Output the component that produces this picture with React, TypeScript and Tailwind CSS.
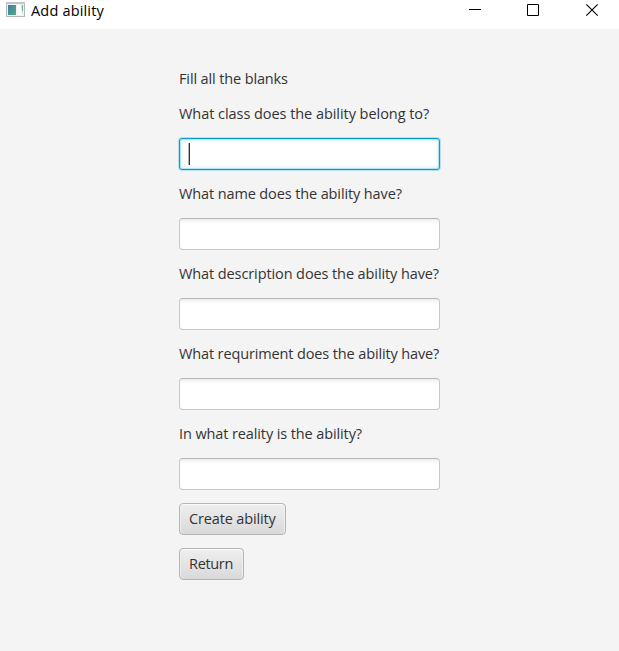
import type { ReactNode } from "react";

const labelBase = "h-5 whitespace-nowrap leading-5";

function Question({ text, tracking, focused = false }: { text: string; tracking: string; focused?: boolean }) {
  return (
    <div className="flex flex-col gap-3.5">
      <label className={`${labelBase} ${tracking}`}>{text}</label>
      {focused ? (
        <div className="flex h-8 w-[261px] items-center rounded-[3px] border border-[#039ed3] bg-white pl-[9px] shadow-[0_0_0_1px_#b5dfec,inset_0_0_0_1px_#b5e2f1,inset_0_0_3px_2px_#dff3f9]">
          <span className="h-[22px] w-px bg-[#333333] shadow-[-1px_0_0_#b0b0b0]" />
        </div>
      ) : (
        <div className="h-8 w-[261px] rounded-[4px] border border-[#c8c8c8] border-t-[#b5b5b5] bg-gradient-to-b from-[#efefef] to-white to-[5px]" />
      )}
    </div>
  );
}

function Button({ children, className }: { children: ReactNode; className: string }) {
  return (
    <button
      className={`flex h-8 items-center whitespace-nowrap rounded-[4px] border border-[#b5b5b5] bg-gradient-to-b from-[#efefef] to-[#d9d9d9] pl-[9px] leading-5 shadow-[inset_0_1px_0_#fafafa,inset_1px_0_0_#eeeeee,inset_-1px_0_0_#eeeeee] ${className}`}
    >
      {children}
    </button>
  );
}

export default function App() {
  return (
    <div className="flex h-[651px] w-[619px] flex-col overflow-hidden bg-[#f4f4f4] font-['Open_Sans','Noto_Sans',sans-serif] text-[14.5px] text-[#333333]">
      <header className="flex h-[29px] items-start bg-white text-black">
        <svg className="ml-[6px] mt-[2px] h-4 w-5" viewBox="0 0 20 16" shapeRendering="crispEdges">
          <rect x="0" y="0" width="19" height="15" fill="#b5b5bd" />
          <rect x="1" y="1" width="17" height="13" fill="#f3f3f3" />
          <rect x="0" y="0" width="19" height="2" fill="#c4c4cc" />
          <defs>
            <linearGradient id="pane" x1="0" y1="0" x2="1" y2="1">
              <stop offset="0" stopColor="#4777a5" />
              <stop offset="1" stopColor="#4fb083" />
            </linearGradient>
          </defs>
          <rect x="2" y="3" width="8" height="10" fill="url(#pane)" />
          <rect x="12" y="3" width="3" height="10" fill="#ffffff" />
          <rect x="15" y="3" width="1" height="4" fill="#cfe6dc" />
          <rect x="16" y="3" width="1" height="6" fill="#62b994" />
          <rect x="16" y="9" width="1" height="3" fill="#cfe6dc" />
        </svg>
        <h1 className="ml-[5px] mt-px h-5 grow whitespace-nowrap leading-5 tracking-[0.18px]">Add ability</h1>
        <svg className="h-5 w-[169px]" viewBox="0 0 169 20" fill="none" stroke="#000000">
          <path d="M19 9.5h12" />
          <path d="M77.5 4.5h11v11h-11z" />
          <path d="M136.3 4.3l11.4 11.4M147.7 4.3l-11.4 11.4" strokeWidth="1.1" />
        </svg>
      </header>
      <main className="ml-[179px] mt-10 flex flex-col items-start">
        <p className={`${labelBase} mb-[15px] tracking-[-0.13px]`}>Fill all the blanks</p>
        <div className="mb-[13px] flex flex-col gap-3.5">
          <Question text="What class does the ability belong to?" tracking="tracking-[-0.05px]" focused />
          <Question text="What name does the ability have?" tracking="tracking-[-0.12px]" />
          <Question text="What description does the ability have?" tracking="tracking-[-0.1px]" />
          <Question text="What requriment does the ability have?" tracking="tracking-[-0.13px]" />
          <Question text="In what reality is the ability?" tracking="tracking-[-0.11px]" />
        </div>
        <Button className="mb-[13px] w-[107px] tracking-[-0.14px]">Create ability</Button>
        <Button className="w-[65px] tracking-[-0.32px]">Return</Button>
      </main>
    </div>
  );
}
